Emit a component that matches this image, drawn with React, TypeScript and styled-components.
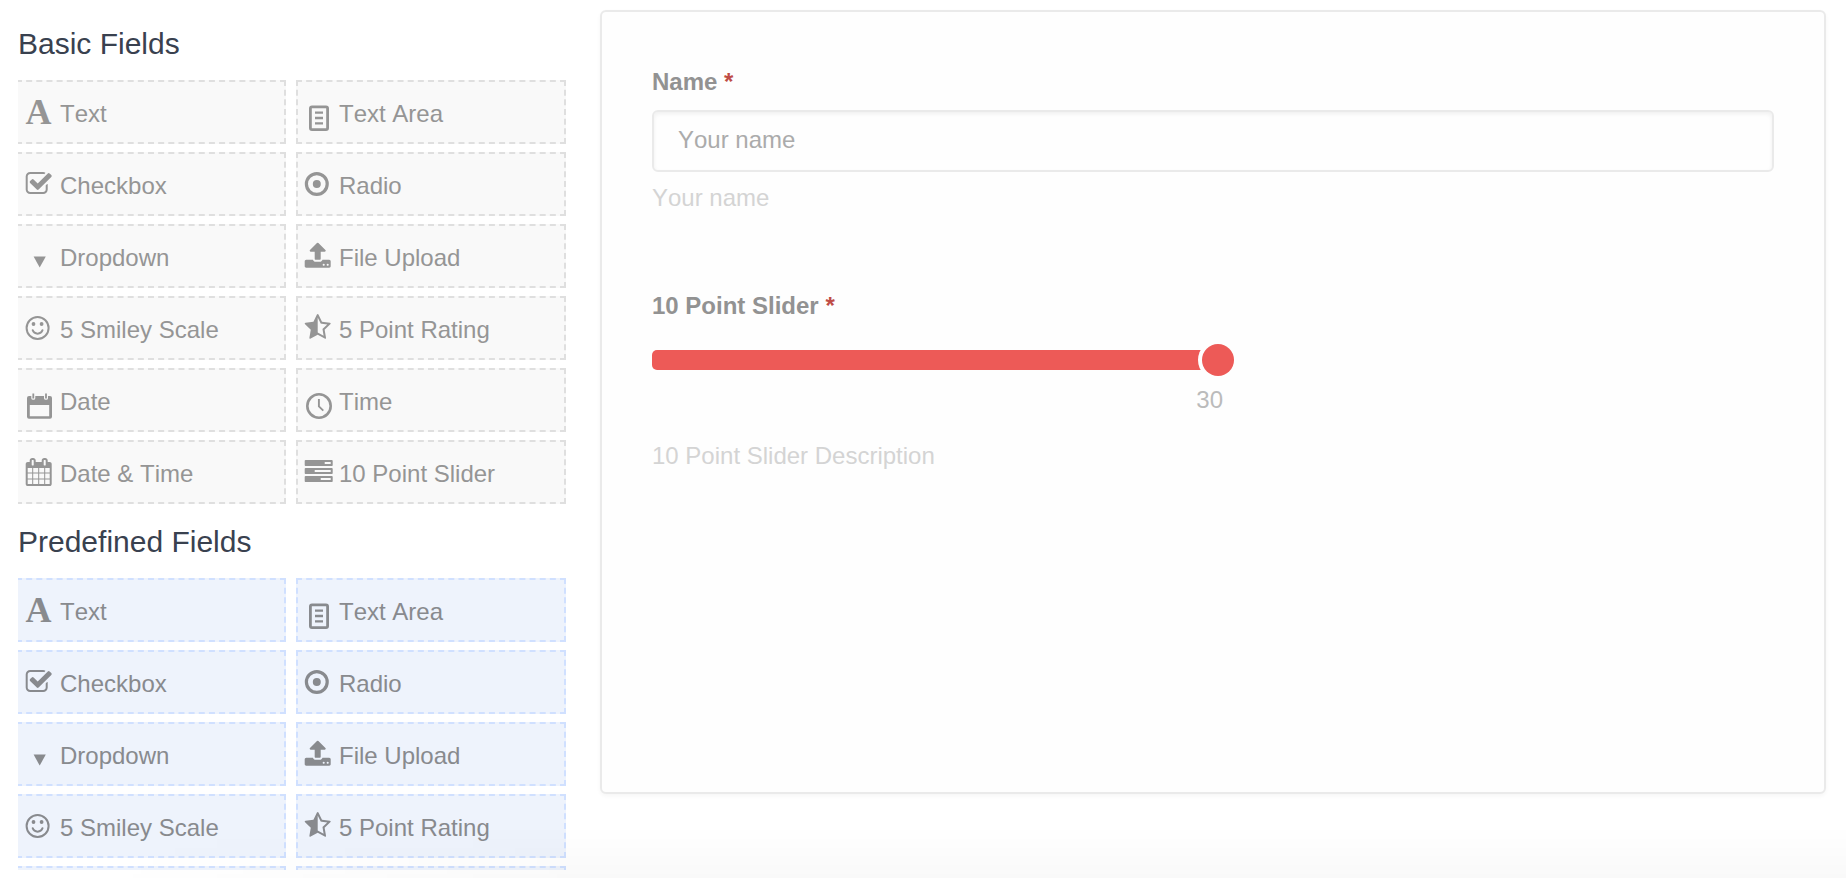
import React from "react";
import styled, { createGlobalStyle, css } from "styled-components";

const GlobalStyle = createGlobalStyle`
  html, body, #root { height: 100%; }
  body {
    margin: 0;
    overflow: hidden;
    background: #fff;
    font-family: "Liberation Sans", Arial, Helvetica, sans-serif;
    font-size: 24px;
    line-height: 28px;
    font-kerning: none;
  }
  * { box-sizing: border-box; }
`;

const Page = styled.div`
  position: relative;
  display: flex;
  align-items: flex-start;
  height: 878px;
  padding-left: 18px;
`;

/* Faint shade over the lower edge, fading out towards the left. */
const BottomShade = styled.div`
  position: absolute;
  left: 0;
  right: 0;
  bottom: 0;
  height: 52px;
  background: linear-gradient(to bottom, rgba(0, 0, 0, 0), rgba(0, 0, 0, 0.01) 50%, rgba(0, 0, 0, 0.025));
  mask-image: linear-gradient(to right, transparent 90px, #000 600px);
  pointer-events: none;
`;

const Sidebar = styled.aside`
  flex: none;
  width: 548px;
  height: 870px;
  overflow: hidden;
`;

const Heading = styled.h2<{ $first?: boolean }>`
  margin: 0;
  height: ${(p) => (p.$first ? 80 : 74)}px;
  padding-top: ${(p) => (p.$first ? 26 : 20)}px;
  font-size: 30px;
  font-weight: 400;
  line-height: 36px;
  color: #39414f;
`;

const FieldGrid = styled.div`
  display: grid;
  grid-template-columns: 270px 270px;
  gap: 8px 10px;
  margin-left: -2px;
`;

const Field = styled.div<{ $tone: "plain" | "blue" }>`
  display: flex;
  height: 64px;
  border: 2px dashed;
  ${(p) =>
    p.$tone === "plain"
      ? css`
          color: #959595;
          background: #f9f9f9;
          border-color: #dfdfdf;
        `
      : css`
          color: #888a8e;
          background: #eef3fc;
          border-color: #d0e0ff;
        `}
`;

const FieldIcon = styled.svg`
  flex: none;
  width: 41px;
  height: 60px;
  display: block;
  fill: currentColor;
`;

const FieldLabel = styled.span`
  padding-top: 18px;
  white-space: nowrap;
  ${Field}:nth-child(odd) > & {
    padding-left: 1px;
  }
`;

const Panel = styled.main`
  display: flex;
  flex-direction: column;
  width: 1226px;
  height: 784px;
  margin: 10px 0 0 34px;
  padding: 56px 50px 0;
  border: 2px solid #eaeaea;
  border-radius: 6px;
  background: #fefefe;
  box-shadow: 0 2px 4px rgba(0, 0, 0, 0.04);
`;

const Group = styled.section<{ $gap?: number }>`
  display: flex;
  flex-direction: column;
  margin-top: ${(p) => p.$gap ?? 0}px;
`;

const Label = styled.label`
  font-weight: 700;
  color: #929292;
`;

const Required = styled.span`
  color: #bf4c46;
`;

const Input = styled.input`
  height: 62px;
  margin-top: 14px;
  padding: 0 24px 2px;
  border: 2px solid #eaeaea;
  border-radius: 6px;
  background: #fefefe;
  box-shadow: inset 0 2px 4px rgba(0, 0, 0, 0.06);
  font: inherit;
  font-kerning: none;
  outline: none;
  &::placeholder {
    color: #ababab;
    opacity: 1;
  }
`;

const Help = styled.p<{ $gap: number }>`
  margin: ${(p) => p.$gap}px 0 0;
  color: #d4d4d4;
`;

const Track = styled.div`
  display: flex;
  align-items: center;
  justify-content: flex-end;
  width: 570px;
  height: 20px;
  margin-top: 30px;
  border-radius: 5px 0 0 5px;
  background: linear-gradient(to right, #ed5a57 550px, transparent 550px);
`;

const Thumb = styled.div`
  flex: none;
  display: flex;
  width: 40px;
  height: 40px;
  margin-right: -16px;
  padding: 4px;
  border-radius: 50%;
  background: #fefefe;
  &::before {
    content: "";
    flex: 1;
    border-radius: 50%;
    background: #ed5a57;
  }
`;

const SliderValue = styled.output`
  width: 571px;
  margin-top: 16px;
  text-align: right;
  color: #bbb;
`;

const fa = 1 / 64;

const icons: Record<string, React.ReactNode> = {
  text: (
    <text x="9.4" y="44" fontFamily="Liberation Serif, serif" fontWeight="700" fontSize="36">
      A
    </text>
  ),
  textarea: (
    <g fill="none" stroke="currentColor">
      <rect x="14.4" y="26.8" width="17.2" height="22.8" rx="1.6" strokeWidth="2.8" />
      <path d="M19 32.7h8M19 38h8M19 43.3h8" strokeWidth="2.3" />
    </g>
  ),
  checkbox: (
    <path
      transform={`translate(8.7 18) scale(${fa})`}
      d="M1472 930v318q0 119-84.5 203.5t-203.5 84.5h-832q-119 0-203.5-84.5t-84.5-203.5v-832q0-119 84.5-203.5t203.5-84.5h832q63 0 117 25 15 7 18 23 3 17-9 29l-49 49q-10 10-23 10-3 0-9-2-23-6-45-6h-832q-66 0-113 47t-47 113v832q0 66 47 113t113 47h832q66 0 113-47t47-113v-254q0-13 9-22l64-64q10-10 23-10 6 0 12 3 20 8 20 29zm231-489l-814 814q-24 24-57 24t-57-24l-430-430q-24-24-24-57t24-57l110-110q24-24 57-24t57 24l263 263 647-647q24-24 57-24t57 24l110 110q24 24 24 57t-24 57z"
    />
  ),
  radio: (
    <>
      <circle cx="20.8" cy="32" r="10.4" fill="none" stroke="currentColor" strokeWidth="3.2" />
      <circle cx="20.8" cy="32" r="4" />
    </>
  ),
  dropdown: <path d="M17.6 32.6h12.2l-6.1 11z" />,
  upload: (
    <path
      fillRule="evenodd"
      transform={`translate(7.7 17.7) scale(${fa})`}
      d="M1344 1472q0-26-19-45t-45-19-45 19-19 45 19 45 45 19 45-19 19-45zm256 0q0-26-19-45t-45-19-45 19-19 45 19 45 45 19 45-19 19-45zm128-224v320q0 40-28 68t-68 28h-1472q-40 0-68-28t-28-68v-320q0-40 28-68t68-28h427q21 56 70.5 92t110.5 36h256q61 0 110.5-36t70.5-92h427q40 0 68 28t28 68zm-325-648q-17 40-59 40h-256v448q0 26-19 45t-45 19h-256q-26 0-45-19t-19-45v-448h-256q-42 0-59-40-17-39 14-69l448-448q18-19 45-19t45 19l448 448q31 30 14 69z"
    />
  ),
  smiley: (
    <>
      <circle cx="21.6" cy="32" r="11" fill="none" stroke="currentColor" strokeWidth="2" />
      <circle cx="17.5" cy="28" r="1.9" />
      <circle cx="25.6" cy="28" r="1.9" />
      <path
        d="M16.7 34.2a5.2 5.2 0 0 0 9.8 0"
        fill="none"
        stroke="currentColor"
        strokeWidth="2"
        strokeLinecap="round"
      />
    </>
  ),
  rating: (
    <path
      fillRule="evenodd"
      transform={`translate(7.7 17.4) scale(${fa})`}
      d="M1250 957l257-250-356-52-66-10-30-60-159-322v963l59 31 318 168-60-355-12-66zm452-262l-363 354 86 500q5 33-6 51.5t-34 18.5q-17 0-40-12l-449-236-449 236q-23 12-40 12-23 0-34-18.5t-6-51.5l86-500-364-354q-32-32-23-59.5t54-34.5l502-73 225-455q20-41 49-41 28 0 49 41l225 455 502 73q45 7 54 34.5t-24 59.5z"
    />
  ),
  date: (
    <path
      fillRule="evenodd"
      d="M13 28h2.3v2.2q0 1.6 2 1.6t2-1.6V28H28v2.2q0 1.6 2 1.6t2-1.6V28h2q2 0 2 2v18.7q0 2-2 2H13q-2 0-2-2V30q0-2 2-2zM13.8 37v11.2h19.4V37zM16.4 25.4h1.8v5.2h-1.8zM29.1 25.4h1.8v5.2h-1.8z"
    />
  ),
  time: (
    <g fill="none" stroke="currentColor">
      <circle cx="23" cy="38" r="11.7" strokeWidth="2.6" />
      <path d="M22.9 31v7.4l4.4 4.2" strokeWidth="1.9" />
    </g>
  ),
  datetime: (
    <path
      fillRule="evenodd"
      transform={`translate(8.7 18) scale(${fa})`}
      d="M192 1664h288v-288h-288v288zm352 0h320v-288h-320v288zm-352-352h288v-320h-288v320zm352 0h320v-320h-320v320zm-352-384h288v-288h-288v288zm736 736h320v-288h-320v288zm-384-736h320v-288h-320v288zm768 736h288v-288h-288v288zm-384-352h320v-320h-320v320zm-352-864v-288q0-13-9.5-22.5t-22.5-9.5h-64q-13 0-22.5 9.5t-9.5 22.5v288q0 13 9.5 22.5t22.5 9.5h64q13 0 22.5-9.5t9.5-22.5zm736 864h288v-320h-288v320zm-384-384h320v-288h-320v288zm384 0h288v-288h-288v288zm32-480v-288q0-13-9.5-22.5t-22.5-9.5h-64q-13 0-22.5 9.5t-9.5 22.5v288q0 13 9.5 22.5t22.5 9.5h64q13 0 22.5-9.5t9.5-22.5zm384-64v1280q0 52-38 90t-90 38h-1408q-52 0-90-38t-38-90v-1280q0-52 38-90t90-38h128v-96q0-66 47-113t113-47h64q66 0 113 47t47 113v96h384v-96q0-66 47-113t113-47h64q66 0 113 47t47 113v96h128q52 0 90 38t38 90z"
    />
  ),
  slider: (
    <path
      fillRule="evenodd"
      transform={`translate(8.7 18) scale(${fa})`}
      d="M1024 1408h640v-128h-640v128zm-384-512h1024v-128h-1024v128zm640-512h384v-128h-384v128zM1792 1216v256q0 26-19 45t-45 19h-1664q-26 0-45-19t-19-45v-256q0-26 19-45t45-19h1664q26 0 45 19t19 45zm0-512v256q0 26-19 45t-45 19h-1664q-26 0-45-19t-19-45v-256q0-26 19-45t45-19h1664q26 0 45 19t19 45zm0-512v256q0 26-19 45t-45 19h-1664q-26 0-45-19t-19-45v-256q0-26 19-45t45-19h1664q26 0 45 19t19 45z"
    />
  ),
};

const fields: [string, string][] = [
  ["text", "Text"],
  ["textarea", "Text Area"],
  ["checkbox", "Checkbox"],
  ["radio", "Radio"],
  ["dropdown", "Dropdown"],
  ["upload", "File Upload"],
  ["smiley", "5 Smiley Scale"],
  ["rating", "5 Point Rating"],
  ["date", "Date"],
  ["time", "Time"],
  ["datetime", "Date & Time"],
  ["slider", "10 Point Slider"],
];

function FieldList({ tone, items }: { tone: "plain" | "blue"; items: [string, string][] }) {
  return (
    <FieldGrid>
      {items.map(([icon, label]) => (
        <Field key={icon} $tone={tone}>
          <FieldIcon viewBox="2 2 41 60" aria-hidden="true">
            {icons[icon]}
          </FieldIcon>
          <FieldLabel>{label}</FieldLabel>
        </Field>
      ))}
    </FieldGrid>
  );
}

const NextRowGrid = styled(FieldGrid)`
  margin-top: 8px;
`;

/* The row that is cut off by the sidebar's lower edge. */
function NextRow() {
  return (
    <NextRowGrid>
      <Field $tone="blue" />
      <Field $tone="blue" />
    </NextRowGrid>
  );
}

export default function App() {
  return (
    <>
      <GlobalStyle />
      <Page>
        <Sidebar>
          <Heading $first>Basic Fields</Heading>
          <FieldList tone="plain" items={fields} />
          <Heading>Predefined Fields</Heading>
          <FieldList tone="blue" items={fields.slice(0, 8)} />
          <NextRow />
        </Sidebar>
        <Panel>
          <Group>
            <Label>
              Name <Required>*</Required>
            </Label>
            <Input placeholder="Your name" />
            <Help $gap={12}>Your name</Help>
          </Group>
          <Group $gap={80}>
            <Label>
              10 Point Slider <Required>*</Required>
            </Label>
            <Track>
              <Thumb />
            </Track>
            <SliderValue>30</SliderValue>
            <Help $gap={28}>10 Point Slider Description</Help>
          </Group>
        </Panel>
        <BottomShade />
      </Page>
    </>
  );
}
